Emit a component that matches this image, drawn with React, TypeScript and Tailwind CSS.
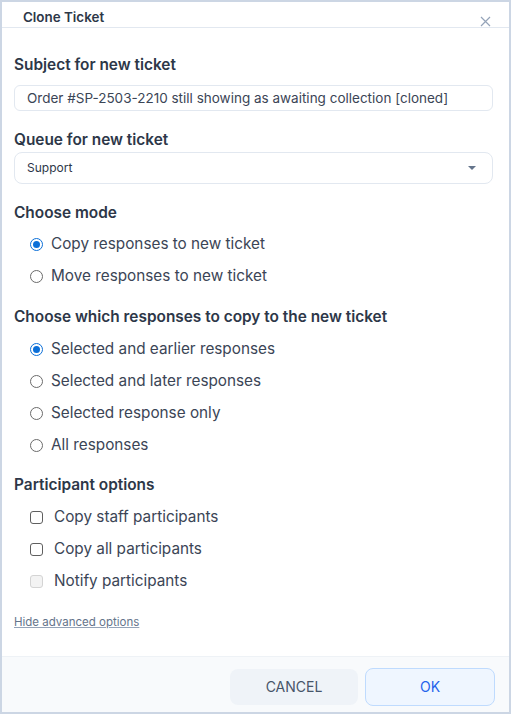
import React, { useState } from 'react';

const font = { fontFamily: 'Inter, "Noto Sans", sans-serif' };

const Radio: React.FC<{ checked: boolean; label: string; onClick: () => void }> = ({ checked, label, onClick }) => (
  <label className="flex items-center h-8 pl-4 cursor-pointer" onClick={onClick}>
    <span
      className={`w-[13px] h-[13px] rounded-full flex items-center justify-center border ${checked ? 'border-[#0b6fd8]' : 'border-[#6b6b6b]'}`}
    >
      {checked && <span className="w-[7px] h-[7px] rounded-full bg-[#0b6fd8]" />}
    </span>
    <span className="ml-[8px] text-[15.3px] text-[#3b4556]">{label}</span>
  </label>
);

const Check: React.FC<{ checked: boolean; disabled?: boolean; label: string; onClick: () => void }> = ({ checked, disabled, label, onClick }) => (
  <label className="flex items-center h-8 pl-4 cursor-pointer" onClick={disabled ? undefined : onClick}>
    <span
      className={`w-[13px] h-[13px] rounded-[3px] border flex items-center justify-center ${disabled ? 'border-[#d4d4d4] bg-[#f3f3f3]' : checked ? 'border-[#0b6fd8] bg-[#0b6fd8]' : 'border-[#5f5f5f] bg-white'}`}
    >
      {checked && (
        <svg width="9" height="9" viewBox="0 0 10 10" fill="none" stroke="white" strokeWidth="2">
          <path d="M2 5.2l2 2 4-4.4" />
        </svg>
      )}
    </span>
    <span className="ml-[11px] text-[15.3px] text-[#3b4556]">{label}</span>
  </label>
);

const App: React.FC = () => {
  const [mode, setMode] = useState(0);
  const [which, setWhich] = useState(0);
  const [staff, setStaff] = useState(false);
  const [all, setAll] = useState(false);

  return (
    <div className="w-[511px] h-[714px] bg-white border-2 border-[#ccd6e4] flex flex-col relative" style={font}>
      <div className="h-[26px] border-b border-[#e2e8f0] flex items-end pl-[21px]">
        <span className="text-[13.4px] font-semibold text-[#2d3748] leading-5">Clone Ticket</span>
      </div>
      <button className="absolute right-[18px] top-[14px] text-[#94a3b8]">
        <svg width="11" height="11" viewBox="0 0 11 11" stroke="currentColor" strokeWidth="1.2" fill="none">
          <path d="M1 1l9 9M10 1l-9 9" />
        </svg>
      </button>

      <div className="flex-1 pl-3 pr-4 pt-[27px]">
        <div className="text-[15.4px] font-semibold text-[#2d3748] leading-5">Subject for new ticket</div>
        <input
          className="mt-[10px] w-full h-[26px] rounded-md border border-[#e2e8f0] px-3 text-[13.5px] text-[#3b4556] outline-none"
          defaultValue="Order #SP-2503-2210 still showing as awaiting collection [cloned]"
        />

        <div className="mt-[19px] text-[15.4px] font-semibold text-[#2d3748] leading-5">Queue for new ticket</div>
        <div className="mt-[2px] w-full h-[32px] rounded-lg border border-[#e2e8f0] flex items-center justify-between pl-3 pr-[16px]">
          <span className="text-[12px] text-[#2d3748]">Support</span>
          <svg width="8" height="5" viewBox="0 0 8 5">
            <path d="M0 0h8L4 4z" fill="#64748b" />
          </svg>
        </div>

        <div className="mt-[19px] text-[15.4px] font-semibold text-[#2d3748] leading-5">Choose mode</div>
        <div className="mt-[5px] flex flex-col">
          {['Copy responses to new ticket', 'Move responses to new ticket'].map((l, i) => (
            <Radio key={l} label={l} checked={mode === i} onClick={() => setMode(i)} />
          ))}
        </div>

        <div className="mt-[15px] text-[15.4px] font-semibold text-[#2d3748] leading-5">Choose which responses to copy to the new ticket</div>
        <div className="mt-[6px] flex flex-col">
          {['Selected and earlier responses', 'Selected and later responses', 'Selected response only', 'All responses'].map((l, i) => (
            <Radio key={l} label={l} checked={which === i} onClick={() => setWhich(i)} />
          ))}
        </div>

        <div className="mt-[14px] text-[15.4px] font-semibold text-[#2d3748] leading-5">Participant options</div>
        <div className="mt-[6px] flex flex-col">
          <Check label="Copy staff participants" checked={staff} onClick={() => setStaff(!staff)} />
          <Check label="Copy all participants" checked={all} onClick={() => setAll(!all)} />
          <Check label="Notify participants" checked={false} disabled onClick={() => {}} />
        </div>

        <a href="#" className="block mt-[17px] text-[11.5px] text-[#64748b] underline decoration-[#94a3b8]">
          Hide advanced options
        </a>
      </div>

      <div className="h-[56px] bg-[#f8fafc] border-t border-[#eef2f6] flex items-center justify-end gap-[7px] pr-[14px] pt-[4px]">
        <button className="w-[128px] h-[36px] rounded-lg bg-[#eff3f8] text-[14px] text-[#475569]">CANCEL</button>
        <button className="w-[130px] h-[38px] rounded-lg bg-[#eff6ff] border border-[#bfdbfe] text-[14px] text-[#2563eb]">OK</button>
      </div>
    </div>
  );
};

export default App;
